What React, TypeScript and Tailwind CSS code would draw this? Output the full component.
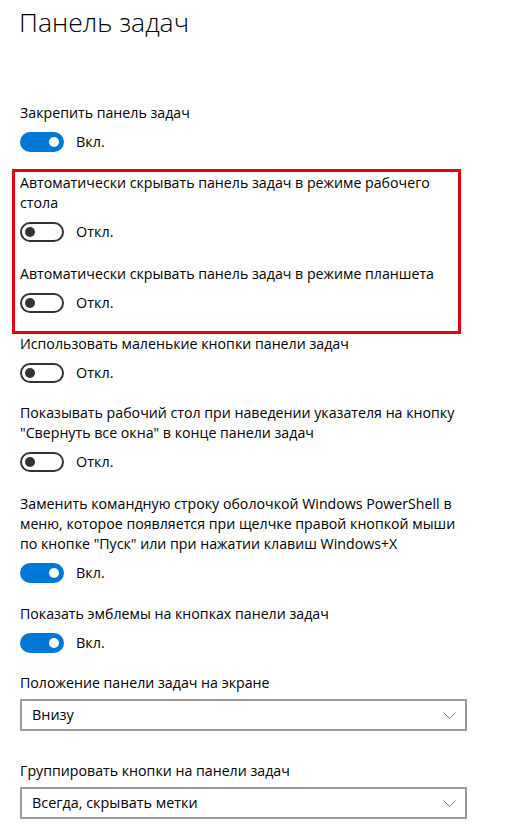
import React from "react";

const font = { fontFamily: '"Open Sans", "Noto Sans", "Liberation Sans", sans-serif' };

function Toggle({ on }: { on: boolean }) {
  return (
    <div className="flex items-center h-[20px]">
      {on ? (
        <div className="w-[44px] h-[20px] rounded-full bg-[#0078d7] flex items-center justify-end pr-[5px]">
          <div className="w-[10px] h-[10px] rounded-full bg-white" />
        </div>
      ) : (
        <div className="w-[44px] h-[20px] rounded-full border-2 border-[#333] flex items-center justify-start pl-[3px]">
          <div className="w-[10px] h-[10px] rounded-full bg-[#333]" />
        </div>
      )}
      <span className="ml-[12px] text-[14.4px] leading-[20px] text-black">{on ? "Вкл." : "Откл."}</span>
    </div>
  );
}

function Item({ label, on, mt }: { label: React.ReactNode; on: boolean; mt: string }) {
  return (
    <div className={mt}>
      <div className="text-[14.2px] leading-[20px] text-black">{label}</div>
      <div className="mt-[9px]">
        <Toggle on={on} />
      </div>
    </div>
  );
}

function Select({ value }: { value: string }) {
  return (
    <div className="mt-[6px] w-[447px] h-[32px] border-2 border-[#999] flex items-center justify-between pl-[10px] pr-[9px]">
      <span className="text-[14.4px] leading-[20px] text-black">{value}</span>
      <svg width="13" height="7" viewBox="0 0 13 7" fill="none">
        <path d="M0.5 0.5 L6.5 6.5 L12.5 0.5" stroke="#777" strokeWidth="1" />
      </svg>
    </div>
  );
}

export default function App() {
  return (
    <div className="relative w-[507px] h-[837px] bg-white overflow-hidden px-[20px]" style={font}>
      <div className="pt-[4px] text-[26.5px] leading-[37px] font-light text-black ml-[-1px]">Панель задач</div>

      <Item mt="mt-[62px]" on={true} label="Закрепить панель задач" />
      <Item
        mt="mt-[21px]"
        on={false}
        label={<>Автоматически скрывать панель задач в режиме рабочего<br />стола</>}
      />
      <Item mt="mt-[22px]" on={false} label="Автоматически скрывать панель задач в режиме планшета" />
      <Item mt="mt-[21px]" on={false} label="Использовать маленькие кнопки панели задач" />
      <Item
        mt="mt-[20px]"
        on={false}
        label={<>Показывать рабочий стол при наведении указателя на кнопку<br />"Свернуть все окна" в конце панели задач</>}
      />
      <Item
        mt="mt-[22px]"
        on={true}
        label={<>Заменить командную строку оболочкой Windows PowerShell в<br />меню, которое появляется при щелчке правой кнопкой мыши<br />по кнопке "Пуск" или при нажатии клавиш Windows+X</>}
      />
      <Item mt="mt-[21px]" on={true} label="Показать эмблемы на кнопках панели задач" />

      <div className="mt-[20px] text-[14.2px] leading-[20px] text-black">Положение панели задач на экране</div>
      <Select value="Внизу" />

      <div className="mt-[30px] text-[14.2px] leading-[20px] text-black">Группировать кнопки на панели задач</div>
      <Select value="Всегда, скрывать метки" />

      <div className="absolute left-[12px] top-[169px] w-[449px] h-[165px] border-[3px] border-[#e4000f] pointer-events-none" />
    </div>
  );
}
